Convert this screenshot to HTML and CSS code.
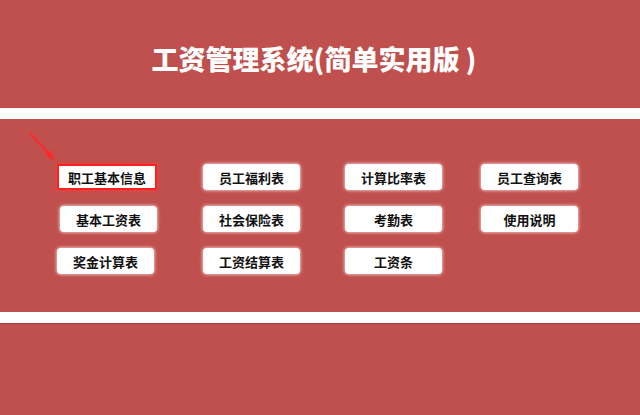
FILE: index.html
```html
<!DOCTYPE html>
<html lang="zh-CN">
<head>
<meta charset="utf-8">
<title>工资管理系统</title>
<link rel="stylesheet" href="styles.css">
</head>
<body>
<header class="header">
  <h1 class="title">工资管理系统(简单实用版 )</h1>
</header>
<div class="bar"></div>
<main class="menu">
  <svg class="arrow" width="40" height="40" viewBox="0 0 40 40">
    <line x1="2" y1="2" x2="22" y2="24" stroke="#ff2a2a" stroke-width="2"/>
    <polygon points="27,30 17,24 23,19" fill="#ff2a2a"/>
  </svg>
  <div class="grid">
    <div class="btn btn-active">职工基本信息</div>
    <div class="btn">员工福利表</div>
    <div class="btn">计算比率表</div>
    <div class="btn">员工查询表</div>
    <div class="btn shift-r">基本工资表</div>
    <div class="btn">社会保险表</div>
    <div class="btn">考勤表</div>
    <div class="btn">使用说明</div>
    <div class="btn">奖金计算表</div>
    <div class="btn">工资结算表</div>
    <div class="btn">工资条</div>
  </div>
</main>
<div class="bar bar-bottom"></div>
<footer class="footer"></footer>
</body>
</html>
```
FILE: styles.css
```css
html, body {
  margin: 0;
  padding: 0;
  background: #c0504d;
  font-family: "Noto Sans CJK SC", "Noto Sans", sans-serif;
}
.header {
  height: 108px;
  display: flex;
  align-items: center;
  justify-content: center;
  padding-right: 12px;
  box-sizing: border-box;
}
.title {
  margin: 8px 0 0 0;
  color: #ffffff;
  font-size: 27px;
  font-weight: 800;
  letter-spacing: 0;
  line-height: 1;
}
.bar {
  height: 11px;
  background: #ffffff;
}
.bar-bottom {
  box-shadow: 0 1px 0 rgba(110, 40, 40, 0.45);
}
.menu {
  position: relative;
  height: 193px;
  box-sizing: border-box;
  padding: 45px 0 0 57px;
}
.arrow {
  position: absolute;
  left: 28px;
  top: 12px;
}
.grid {
  display: grid;
  grid-template-columns: 146px 142px 136px 100px;
  grid-auto-rows: 26px;
  row-gap: 16px;
}
.btn {
  width: 97px;
  height: 26px;
  box-sizing: border-box;
  background: #ffffff;
  border-radius: 4px;
  box-shadow: 0 0 3px 1px rgba(255, 215, 215, 0.75);
  color: #111111;
  font-size: 13px;
  font-weight: 700;
  display: flex;
  align-items: center;
  justify-content: center;
}
.btn-active {
  width: 100px;
  border: 2px solid #ff1f1f;
  border-radius: 2px;
  box-shadow: 0 0 3px 1px rgba(255, 60, 60, 0.7);
}
.shift-r {
  margin-left: 3px;
}
.footer {
  height: 92px;
}
```
